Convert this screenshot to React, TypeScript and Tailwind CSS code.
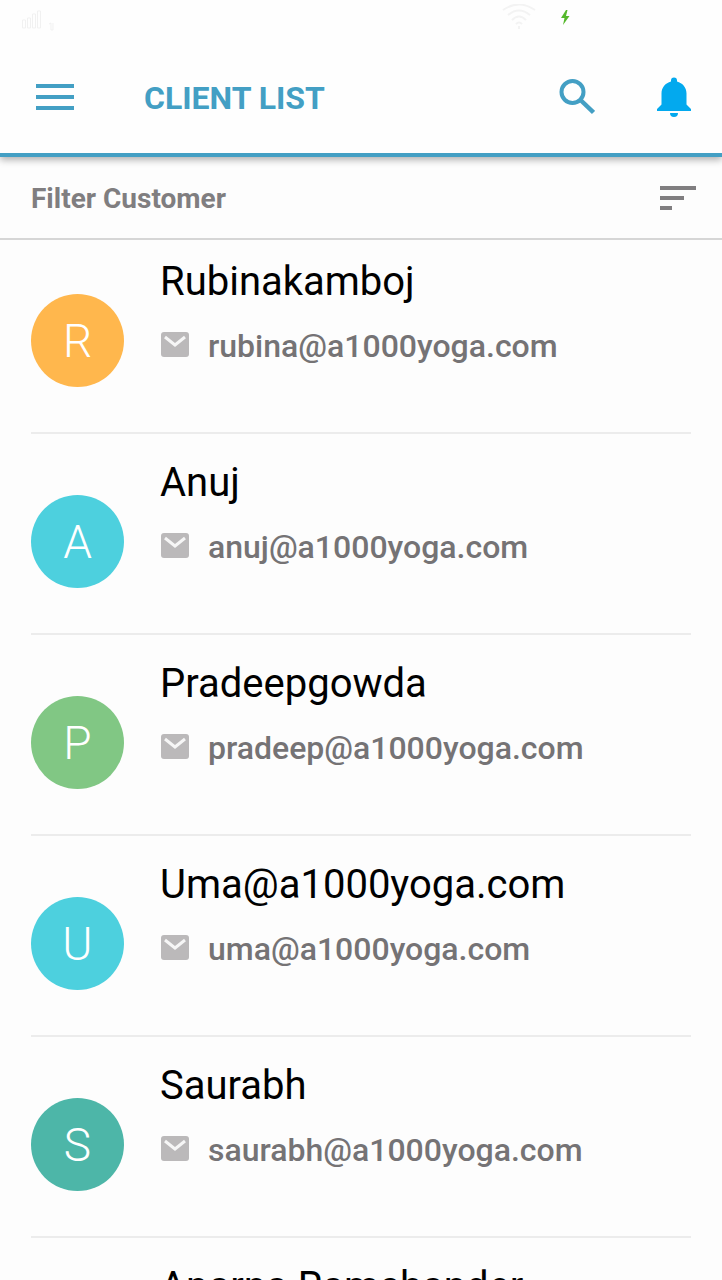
import type { ReactNode } from "react";

type Client = { name: string; email: string; color: string };

const clients: Client[] = [
  { name: "Rubinakamboj", email: "rubina@a1000yoga.com", color: "bg-[#ffb74d]" },
  { name: "Anuj", email: "anuj@a1000yoga.com", color: "bg-[#4dd0de]" },
  { name: "Pradeepgowda", email: "pradeep@a1000yoga.com", color: "bg-[#81c784]" },
  { name: "Uma@a1000yoga.com", email: "uma@a1000yoga.com", color: "bg-[#4dd0de]" },
  { name: "Saurabh", email: "saurabh@a1000yoga.com", color: "bg-[#4db6a8]" },
  { name: "Aparna Ramchander", email: "aparna@a1000yoga.com", color: "bg-[#ffb74d]" },
];

function IconButton({ label, children }: { label: string; children: ReactNode }) {
  return (
    <button type="button" aria-label={label} className="flex size-12 items-center justify-center">
      {children}
    </button>
  );
}

function StatusBar() {
  return (
    <div className="flex h-9 shrink-0 items-start justify-between pt-1 pr-[152px] pl-5" aria-hidden="true">
      <svg width="36" height="28" viewBox="0 0 36 28" fill="none" stroke="#f1f1f1">
        <path d="M2.5 16v8h3v-8zM7.5 14v10h3V14zM12.5 10v14h3V10zM17.5 7v17h3V7zM29 20l2-1v7h2v-7" />
      </svg>
      <div className="flex items-start gap-6">
        <svg width="34" height="26" viewBox="0 0 34 26" fill="none" stroke="#f3f3f3" strokeWidth="2">
          <path d="M1 6Q17-5 33 6M6 11Q17 2 28 11M10 16Q17 9 24 16M14 20Q17 17 20 20M17 22v3" />
        </svg>
        <svg width="10" height="26" viewBox="0 0 10 26" fill="#55b82c">
          <path d="M6 6 1 14h3.500L3 21 9.500 12H6L7.500 6z" />
        </svg>
      </div>
    </div>
  );
}

function Row({ client }: { client: Client }) {
  return (
    <li className="flex h-[201px] items-start border-b-2 border-[#ececec] pt-[13px]">
      <div
        className={`mt-[48px] flex size-[93px] shrink-0 items-center justify-center rounded-full pt-[2px] font-light text-[46px] text-white ${client.color}`}
        aria-hidden="true"
      >
        {client.name[0]}
      </div>
      <div className="ml-9 min-w-0 pt-2">
        <h2 className="text-[40px] leading-[56px] whitespace-nowrap text-black">{client.name}</h2>
        <p className="mt-2 flex items-center gap-[18px] text-[32px] leading-[56px] font-medium text-[#757375]">
          <svg width="30" height="28" viewBox="0 0 30 28" className="shrink-0">
            <rect x="1" y="0" width="28" height="25" rx="3" fill="#bbb9ba" />
            <path d="M5 5l10 8 10-8" fill="none" stroke="#f6f6f6" strokeWidth="3" />
          </svg>
          {client.email}
        </p>
      </div>
    </li>
  );
}

export default function App() {
  return (
    <div className="flex h-screen flex-col overflow-hidden bg-[#fdfdfd] font-['Roboto',sans-serif]">
      <div className="relative shrink-0 border-b-4 border-[#439fc4] bg-[#fefefe] shadow-[0_3px_7px_rgba(0,0,0,0.3)]">
        <StatusBar />
        <header className="flex h-[117px] items-center pt-1 pr-6 pl-[31px]">
          <IconButton label="Open menu">
            <svg width="38" height="26" viewBox="0 0 38 26" fill="#439fc4">
              <path d="M0 0h38v4H0zM0 11h38v4H0zM0 22h38v4H0z" />
            </svg>
          </IconButton>
          <h1 className="ml-[65px] flex-1 pt-[2px] text-[32px] leading-10 font-bold text-[#439fc4]">CLIENT LIST</h1>
          <div className="flex gap-[49px]">
            <IconButton label="Search">
              <svg width="36" height="36" viewBox="0 0 36 36" fill="none" stroke="#439fc4">
                <circle cx="13.5" cy="13" r="11" strokeWidth="4" />
                <path d="M22 21.5L34.500 33.500" strokeWidth="4.500" />
              </svg>
            </IconButton>
            <IconButton label="Notifications">
              <svg width="34" height="40" viewBox="0 0 34 40" fill="#03a9ee">
                <path d="M17 0.500a3 3 0 0 1 3 3v1c5.500 1.500 9.500 6 9.500 12V27.500l4.500 4.500v2H0v-2l4.500-4.500V16.500c0-6 4-10.500 9.500-12v-1a3 3 0 0 1 3-3zM13 36h8a4 4 0 0 1-8 0z" />
              </svg>
            </IconButton>
          </div>
        </header>
      </div>
      <div className="flex h-[83px] shrink-0 items-center justify-between border-b-2 border-[#d6d6d6] pr-5 pl-[31px]">
        <h2 className="pt-[2px] text-[28px] leading-10 font-bold text-[#807e80]">Filter Customer</h2>
        <IconButton label="Sort customers">
          <svg width="36" height="24" viewBox="0 0 36 24" fill="#807e80">
            <path d="M0 0h36v4H0zM0 10h24v4H0zM0 20h12v4H0z" />
          </svg>
        </IconButton>
      </div>
      <ul className="-mt-[7px] flex-1 overflow-hidden px-[31px]">
        {clients.map((client) => (
          <Row key={client.name} client={client} />
        ))}
      </ul>
    </div>
  );
}
